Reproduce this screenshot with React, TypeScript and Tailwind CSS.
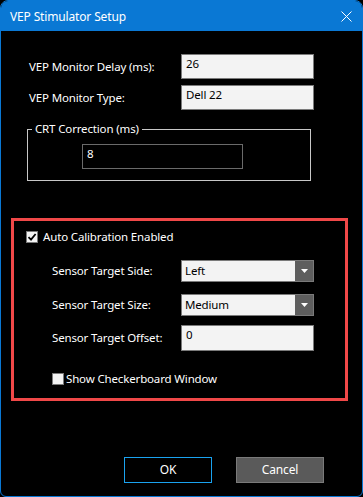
import { useState } from 'react';

const font = { fontFamily: '"Noto Sans", "Open Sans", sans-serif' };

function TextBox({ value }: { value: string }) {
  return (
    <div className="w-[133px] h-[25px] bg-[#f3f3f3] border border-[#7a7a7a] pl-[4px] pt-[1px] text-black leading-4">
      {value}
    </div>
  );
}

function Combo({ value }: { value: string }) {
  return (
    <div className="w-[133px] h-[22px] flex bg-[#f3f3f3] border border-[#7a7a7a]">
      <div className="flex-1 flex items-center pl-[3px] text-black">{value}</div>
      <div className="w-[18px] h-full bg-[#5e5e5e] flex items-center justify-center">
        <svg width="7" height="4" viewBox="0 0 7 4">
          <path d="M0 0 H7 L3.5 4 Z" fill="#ffffff" />
        </svg>
      </div>
    </div>
  );
}

function Check({ checked }: { checked: boolean }) {
  return (
    <div className="w-[12px] h-[12px] bg-[#f3f3f3] border border-[#7a7a7a] flex items-center justify-center">
      {checked && (
        <svg width="10" height="10" viewBox="0 0 10 10">
          <path d="M1.5 5.2 L4 7.6 L8.6 2" stroke="#000" strokeWidth="1.8" fill="none" />
        </svg>
      )}
    </div>
  );
}

export default function App() {
  const [auto] = useState(true);

  return (
    <div className="w-[363px] h-[497px] bg-black text-white text-[11.5px] tracking-[-0.15px]" style={font}>
      <div className="w-full h-full flex flex-col border border-[#0a78d4] rounded-t-[8px] rounded-b-[6px] overflow-hidden">
        {/* Title bar */}
        <div className="h-[30px] shrink-0 bg-[#0a78d4] flex items-center justify-between pl-[9px] pr-[10px] pt-[1px]">
          <span className="text-[12px]">VEP Stimulator Setup</span>
          <svg width="11" height="11" viewBox="0 0 11 11">
            <path d="M0.5 0.5 L10.5 10.5 M10.5 0.5 L0.5 10.5" stroke="#ffffff" strokeWidth="1" />
          </svg>
        </div>

        {/* Monitor rows */}
        <div className="flex items-center mt-[23px] ml-[28px]">
          <span className="w-[152px]">VEP Monitor Delay (ms):</span>
          <TextBox value="26" />
        </div>
        <div className="flex items-center mt-[6px] ml-[28px]">
          <span className="w-[152px]">VEP Monitor Type:</span>
          <TextBox value="Dell 22" />
        </div>

        {/* CRT group */}
        <fieldset className="mt-[11px] ml-[26px] w-[284px] border border-[#c8c8c8] pb-[11px]">
          <legend className="ml-[4px] px-[3px] leading-4">CRT Correction (ms)</legend>
          <div className="mt-[7px] ml-[54px] w-[161px] h-[25px] border border-[#6a6a6a] pl-[4px] pt-[1px] leading-4">8</div>
        </fieldset>

        {/* Auto calibration */}
        <div className="mt-[37px] ml-[10px] w-[337px] h-[183px] border-[3px] border-[#f04848] flex flex-col">
          <div className="flex items-center mt-[10px] ml-[12px] h-[12px] gap-[5px]">
            <Check checked={auto} />
            <span>Auto Calibration Enabled</span>
          </div>
          <div className="flex items-center mt-[17px] ml-[38px]">
            <span className="w-[129px]">Sensor Target Side:</span>
            <Combo value="Left" />
          </div>
          <div className="flex items-center mt-[12px] ml-[38px]">
            <span className="w-[129px]">Sensor Target Size:</span>
            <Combo value="Medium" />
          </div>
          <div className="flex items-center mt-[9px] ml-[38px]">
            <span className="w-[129px]">Sensor Target Offset:</span>
            <div className="w-[133px] h-[26px] bg-[#f3f3f3] border border-[#7a7a7a] pl-[4px] pt-[1px] text-black leading-4">0</div>
          </div>
          <div className="flex items-center mt-[22px] ml-[38px] h-[12px] gap-[2px]">
            <Check checked={false} />
            <span>Show Checkerboard Window</span>
          </div>
        </div>

        {/* Buttons */}
        <div className="flex mt-[56px] ml-[123px] gap-[24px]">
          <div className="w-[88px] h-[26px] border border-[#1aa3f0] flex items-center justify-center text-[12px]">OK</div>
          <div className="w-[88px] h-[26px] border border-[#7a7a7a] bg-[#5a5a5a] flex items-center justify-center text-[12px]">Cancel</div>
        </div>
      </div>
    </div>
  );
}
